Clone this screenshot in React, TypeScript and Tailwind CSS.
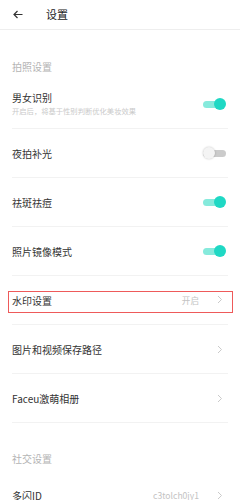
import type { ReactNode } from "react";

// Camera settings page: grouped rows with toggles and disclosure chevrons.
const FONT = { fontFamily: '"Noto Sans CJK SC", "Noto Sans", Roboto, sans-serif' };

function Toggle({ on }: { on: boolean }) {
  return (
    <div className="relative mr-[2px] h-[12px] w-[23px]">
      <div
        className={
          on
            ? "absolute left-0 right-[2px] top-[2.5px] h-[7px] rounded-full bg-[#86eadc]"
            : "absolute left-0 right-0 top-[2.5px] h-[7px] rounded-full bg-[#cbcbcb]"
        }
      />
      <div
        className={
          on
            ? "absolute right-0 top-0 h-[12px] w-[12px] rounded-full bg-[#1fd8c4]"
            : "absolute left-0 top-0 h-[12px] w-[12px] rounded-full bg-[#f4f4f4] shadow-[0_0_2px_rgba(0,0,0,0.25)]"
        }
      />
    </div>
  );
}

function Chevron() {
  return (
    <svg width="6" height="9" viewBox="0 0 6 9" className="mr-[5px]">
      <path d="M1 1 L4.5 4.5 L1 8" fill="none" stroke="#c4c4c4" strokeWidth="0.9" />
    </svg>
  );
}

function SectionLabel({ children, first }: { children: ReactNode; first?: boolean }) {
  return (
    <div
      className={
        first
          ? "flex h-[50px] items-end pb-[7px] text-[10px] leading-[12px] text-[#b4b4b4]"
          : "flex h-12 items-end pb-[6px] text-[10px] leading-[12px] text-[#b4b4b4]"
      }
    >
      {children}
    </div>
  );
}

interface RowProps {
  title: string;
  subtitle?: string;
  value?: string;
  right: ReactNode;
  highlight?: boolean;
  last?: boolean;
}

function Row(props: RowProps) {
  const { title, subtitle, value, right, highlight, last } = props;
  return (
    <div
      className={
        last
          ? "relative flex h-[49px] items-center justify-between"
          : "relative flex h-[49px] items-center justify-between border-b border-[#f2f2f2]"
      }
    >
      <div className={subtitle ? "flex flex-col gap-[3px] pb-[1px]" : "flex flex-col pt-[1px]"}>
        <span className="text-[10px] leading-[12px] text-[#333333]">{title}</span>
        {subtitle ? <span className="text-[7.3px] leading-[9px] text-[#cacaca]">{subtitle}</span> : null}
      </div>
      <div className="flex items-center">
        {value ? <span className="mr-[18px] text-[8.6px] text-[#c3c3c3]">{value}</span> : null}
        {right}
      </div>
      {highlight ? (
        <div className="absolute left-[-4px] right-[-5px] top-[15px] h-[22px] border border-[#ee5a5a]" />
      ) : null}
    </div>
  );
}

export default function App() {
  return (
    <div className="h-[500px] w-[240px] overflow-hidden bg-white" style={FONT}>
      <header className="flex h-[30px] items-center border-b border-[#eeeeee] pl-[13px]">
        <svg width="10" height="9" viewBox="0 0 10 9">
          <path d="M9.5 4.5 H1 M4.5 1 L1 4.5 L4.5 8" fill="none" stroke="#333333" strokeWidth="1.2" />
        </svg>
        <span className="ml-[23px] text-[11px] text-[#222222]">设置</span>
      </header>
      <div className="px-3">
        <SectionLabel first>拍照设置</SectionLabel>
        <Row title="男女识别" subtitle="开启后，将基于性别判断优化美妆效果" right={<Toggle on />} />
        <Row title="夜拍补光" right={<Toggle on={false} />} />
        <Row title="祛斑祛痘" right={<Toggle on />} />
        <Row title="照片镜像模式" right={<Toggle on />} />
        <Row title="水印设置" value="开启" right={<Chevron />} highlight />
        <Row title="图片和视频保存路径" right={<Chevron />} />
        <Row title="Faceu激萌相册" right={<Chevron />} />
        <SectionLabel>社交设置</SectionLabel>
        <Row title="多闪ID" value="c3tolch0jy1" right={<Chevron />} last />
      </div>
    </div>
  );
}
